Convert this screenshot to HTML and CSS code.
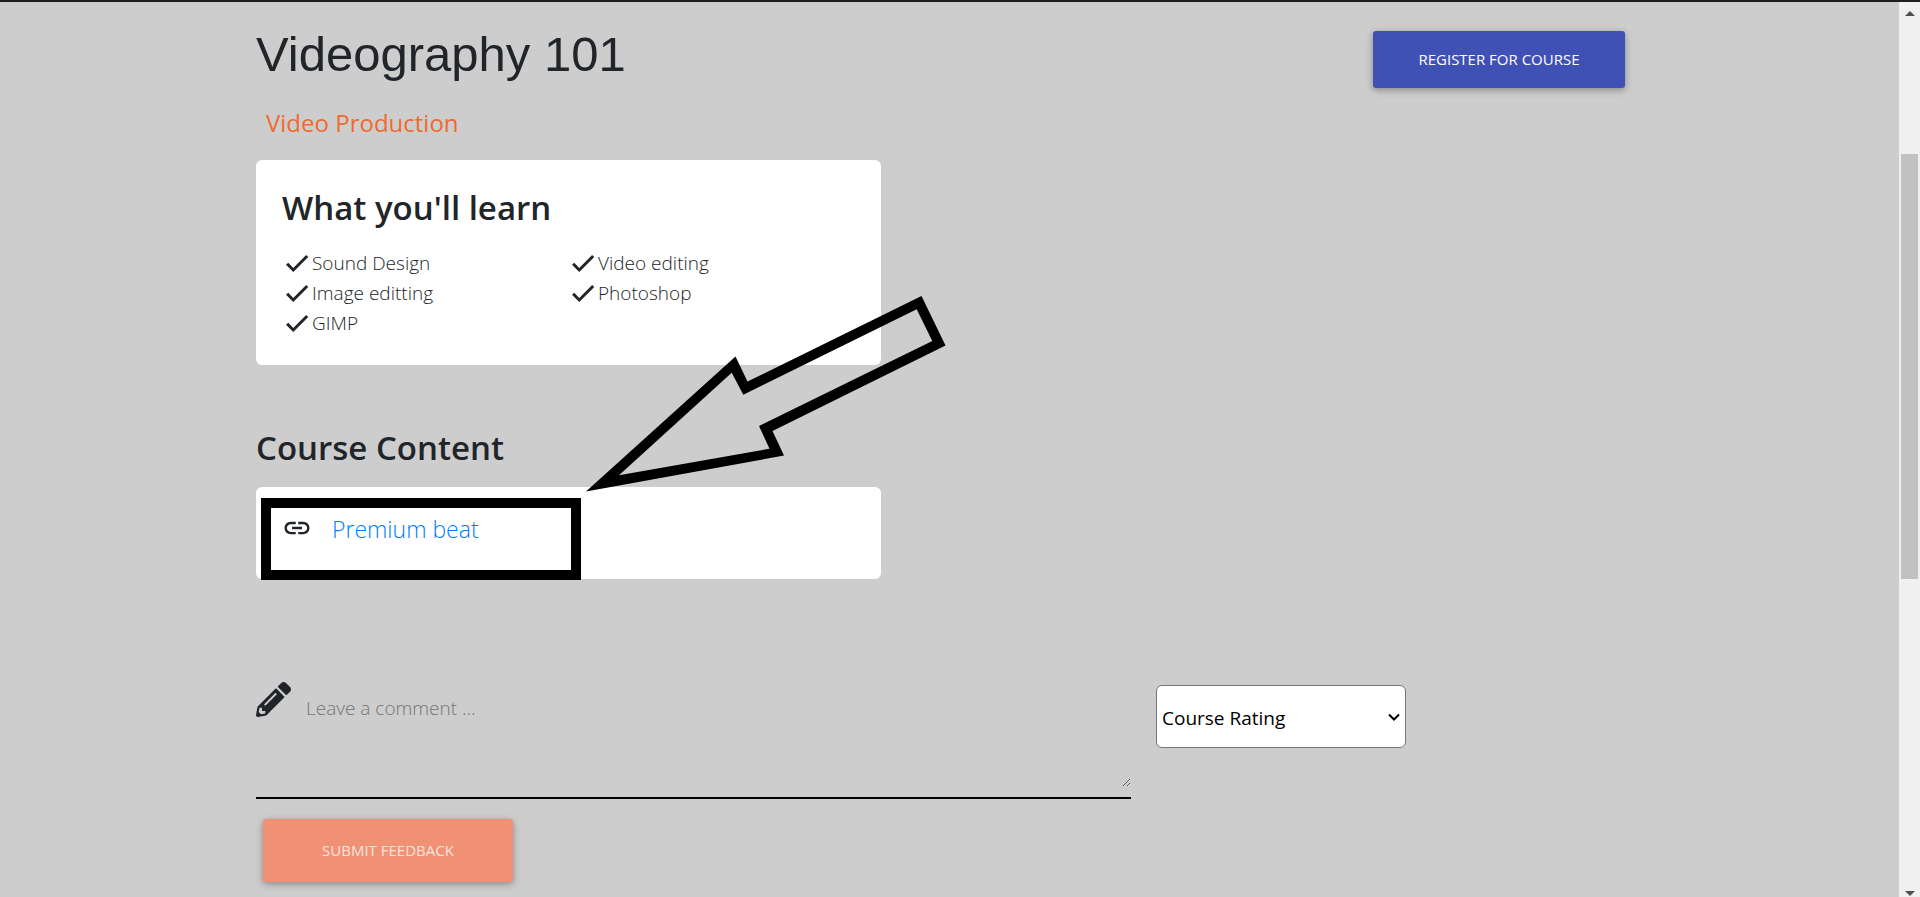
FILE: index.html
```html
<!DOCTYPE html>
<html lang="en">
<head>
<meta charset="utf-8">
<title>Videography 101</title>
<link rel="stylesheet" href="styles.css">
</head>
<body>
<svg class="defs" aria-hidden="true">
  <symbol id="check" viewBox="0 0 24 24"><path d="M9 15.9 5 11.7l-1.8 1.7L9 19.2 21 7.2l-1.7-1.7z"/></symbol>
</svg>
<div class="navbar-edge"></div>
<div class="viewport">
  <main class="page">
    <header class="course-head">
      <div>
        <h1 class="title">Videography 101</h1>
        <p class="category">Video Production</p>
      </div>
      <button class="btn btn-primary" type="button">REGISTER FOR COURSE</button>
    </header>

    <section class="card learn">
      <h2 class="heading">What you'll learn</h2>
      <ul class="skills">
        <li class="skill"><svg class="check"><use href="#check"/></svg>Sound Design</li>
        <li class="skill"><svg class="check"><use href="#check"/></svg>Video editing</li>
        <li class="skill"><svg class="check"><use href="#check"/></svg>Image editting</li>
        <li class="skill"><svg class="check"><use href="#check"/></svg>Photoshop</li>
        <li class="skill"><svg class="check"><use href="#check"/></svg>GIMP</li>
      </ul>
    </section>

    <section class="content">
      <h2 class="heading">Course Content</h2>
      <div class="card resources">
        <svg class="link-icon" viewBox="0 0 24 24" aria-hidden="true"><path d="M3.9 12c0-1.71 1.39-3.1 3.1-3.1h4V7H7c-2.76 0-5 2.24-5 5s2.24 5 5 5h4v-1.9H7c-1.71 0-3.1-1.39-3.1-3.1zM8 13h8v-2H8v2zm9-6h-4v1.9h4c1.71 0 3.1 1.39 3.1 3.1s-1.39 3.1-3.1 3.1h-4V17h4c2.76 0 5-2.24 5-5s-2.24-5-5-5z"/></svg>
        <a class="resource-link" href="#premium-beat">Premium beat</a>
        <div class="highlight"></div>
        <svg class="arrow" viewBox="586 295 360 197" aria-hidden="true"><path fill-rule="evenodd" d="M586 491.5 735.5 356.5 747.5 381.5 921.5 296 945.5 345.5 772.5 431 784 455.5zM619 475.3 769.5 448.7 759 426 932.3 341 916.7 309.3 743.3 394.7 731.7 372.7z"/></svg>
      </div>
    </section>

    <form class="feedback">
      <div class="feedback-row">
        <div class="comment">
          <svg class="pencil" viewBox="0 0 512 512" aria-hidden="true"><path d="M497.9 142.1l-46.1 46.1c-4.7 4.7-12.3 4.7-17 0l-111-111c-4.7-4.7-4.7-12.3 0-17l46.1-46.1c18.7-18.7 49.1-18.7 67.9 0l60.1 60.1c18.8 18.7 18.8 49.1 0 67.9zM284.2 99.8L21.6 362.4.4 483.9c-2.9 16.4 11.4 30.6 27.8 27.8l121.5-21.3 262.6-262.6c4.7-4.7 4.7-12.3 0-17l-111-111c-4.8-4.7-12.4-4.7-17.1 0zM124.1 339.9c-5.5-5.5-5.5-14.3 0-19.8l154-154c5.5-5.5 14.3-5.5 19.8 0s5.5 14.3 0 19.8l-154 154c-5.5 5.5-14.3 5.5-19.8 0zM88 424h48v36.3l-64.5 11.3-31.1-31.1L51.7 376H88v48z"/></svg>
          <textarea class="comment-box" aria-label="Comment" placeholder="Leave a comment ..."></textarea>
        </div>
        <div class="rating">
          <select class="rating-select" aria-label="Course Rating"><option>Course Rating</option></select>
          <svg class="chevron" viewBox="0 0 12 8" aria-hidden="true"><path d="M1 1.5 6 6.5 11 1.5"/></svg>
        </div>
      </div>
      <button class="btn btn-submit" type="button">SUBMIT FEEDBACK</button>
    </form>
  </main>
  <div class="scrollbar" aria-hidden="true">
    <svg class="scroll-arrow" viewBox="0 0 10 5"><path d="M0 5 5 0 10 5z"/></svg>
    <div class="thumb"></div>
    <svg class="scroll-arrow scroll-down" viewBox="0 0 10 5"><path d="M0 0 5 5 10 0z"/></svg>
  </div>
</div>
</body>
</html>
```
FILE: styles.css
```css
* { box-sizing: border-box; }
body {
  margin: 0;
  min-height: 100vh;
  display: flex;
  flex-direction: column;
  background: #cdcdcd;
  color: #212529;
  font-family: "Segoe UI", "Open Sans", "Noto Sans", sans-serif;
  font-size: 20px;
}
h1, h2, p, ul { margin: 0; padding: 0; }
.defs { display: none; }
.navbar-edge { height: 2px; background: #211d1d; }
.viewport { flex: 1; display: flex; }
.page { flex: 1; padding: 22px 274px 12px 256px; }

.course-head { display: flex; justify-content: space-between; align-items: flex-start; }
.title {
  font: 400 49px/60px "Liberation Sans", Arial, sans-serif;
}
.category { margin: 21px 0 0 10px; font-size: 24px; line-height: 36px; color: #f26a2e; }

.btn {
  border: 0;
  border-radius: 3px;
  color: #fff;
  font-family: inherit;
  font-size: 15px;
  padding: 0 0 2px;
  box-shadow: 0 2px 5px rgba(0,0,0,.16), 0 2px 10px rgba(0,0,0,.2);
}
.btn-primary { width: 252px; height: 57px; margin-top: 7px; background: #3f51b5; }
.btn-submit { width: 250px; height: 63px; margin: 20px 0 0 7px; background: #f09175; color: #f6e4de; }

.card { width: 625px; max-width: 100%; background: #fff; border-radius: 6px; }
.heading { font-size: 33px; font-weight: 600; line-height: 44px; }
.learn { margin-top: 19px; padding: 26px 27px 27px 26px; }
.skills {
  display: grid;
  grid-template-columns: 1fr 1fr;
  margin-top: 18px;
  list-style: none;
  font-size: 19px;
  font-weight: 300;
  line-height: 30px;
}
.skill { display: flex; align-items: center; }
.check { width: 30px; height: 30px; fill: #212529; }

.content { margin-top: 61px; }
.resources {
  position: relative;
  display: flex;
  align-items: flex-start;
  gap: 20px;
  height: 92px;
  margin-top: 17px;
  padding: 22px 26px;
}
.link-icon { width: 30px; height: 38px; fill: #212529; }
.resource-link { color: #007bff; font-size: 23px; font-weight: 300; line-height: 40px; text-decoration: none; }
.highlight { position: absolute; left: 5px; top: 11px; width: 320px; height: 82px; border: 10px solid #000; }
.arrow { position: absolute; left: 330px; top: -192px; width: 360px; height: 197px; }

.feedback { margin-top: 103px; }
.feedback-row { display: flex; align-items: flex-start; gap: 25px; }
.comment { display: flex; flex: 0 1 875px; gap: 13px; height: 117px; border-bottom: 2px solid #000; }
.pencil { flex: none; width: 35px; height: 35px; fill: #212529; }
.comment-box {
  flex: 1;
  height: 97px;
  margin-top: 8px;
  padding: 4px 2px;
  border: 0;
  background: transparent;
  font-family: inherit;
  font-size: 19px;
  font-weight: 300;
  line-height: 28px;
}
.comment-box::placeholder { color: #757575; }
.rating { position: relative; width: 250px; margin-top: 3px; }
.rating-select {
  width: 100%;
  height: 63px;
  padding: 2px 5px 0;
  border: 1px solid #767676;
  border-radius: 6px;
  background: #fff;
  color: #000;
  font-family: inherit;
  font-size: 19px;
  appearance: none;
}
.chevron { position: absolute; right: 6px; top: 28px; width: 12px; height: 8px; fill: none; stroke: #000; stroke-width: 2; }

.scrollbar { display: flex; flex-direction: column; align-items: center; width: 21px; padding: 9px 0 1px; background: #f0f0f0; }
.scroll-arrow { width: 10px; height: 5px; fill: #505050; }
.thumb { width: 17px; height: 425px; margin-top: 138px; background: #c1c1c1; }
.scroll-down { margin-top: auto; }
```
